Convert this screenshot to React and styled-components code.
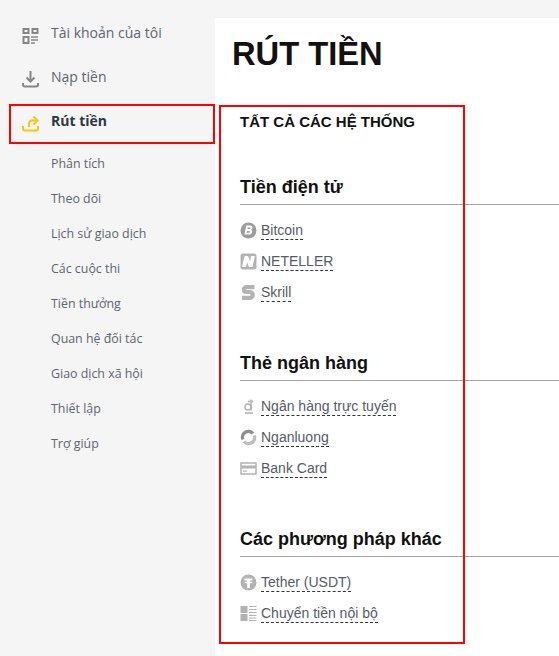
import React from "react";
import styled, { createGlobalStyle } from "styled-components";

const GlobalStyle = createGlobalStyle`
  html, body {
    margin: 0;
    padding: 0;
    height: 100%;
    overflow: hidden;
    background: #f5f5f5;
  }
`;

const Page = styled.div`
  position: relative;
  display: flex;
  width: 559px;
  height: 656px;
  overflow: hidden;
  background: #f5f5f5;
`;

const Sidebar = styled.nav`
  flex: none;
  width: 215px;
  padding-top: 17px;
  box-sizing: border-box;
  font-family: "Open Sans", sans-serif;
`;

const MainLink = styled.div`
  display: flex;
  align-items: flex-start;
  gap: 12px;
  height: 44px;
  padding-left: 22px;
  font-size: 14px;
  line-height: 32px;
  font-weight: ${p => (p.$active ? 700 : 400)};
  color: ${p => (p.$active ? "#2f3542" : "#5d6470")};
`;

const MainIcon = styled.svg`
  flex: none;
  width: 17px;
  height: 17px;
  margin-top: 10px;
`;

const SubList = styled.div`
  display: flex;
  flex-direction: column;
  margin-top: -3px;
  padding-left: 51px;
`;

const SubLink = styled.div`
  height: 35px;
  font-size: 12.4px;
  line-height: 35px;
  color: #5d6470;
`;

const Content = styled.main`
  flex: 1;
  margin-top: 18px;
  padding: 15px 0 0 17px;
  background: #fff;
  font-family: "Liberation Sans", Arial, sans-serif;
`;

const Title = styled.h1`
  margin: 0;
  font-size: 32.7px;
  line-height: 42px;
  font-weight: 700;
  color: #111;
`;

const AllSystems = styled.div`
  margin: 38px 0 0 8px;
  font-size: 15px;
  line-height: 18px;
  font-weight: 700;
  color: #111;
`;

const Group = styled.section`
  margin-top: ${p => (p.$first ? "45px" : "44px")};
  margin-left: 8px;
`;

const GroupTitle = styled.h2`
  margin: 0 0 10px;
  height: 28px;
  font-size: 18px;
  line-height: 23px;
  font-weight: 700;
  color: #111;
  border-bottom: 1px solid #a3a3a3;
`;

const Method = styled.div`
  display: flex;
  align-items: center;
  gap: 4px;
  height: 31px;
`;

const MethodIcon = styled.svg`
  flex: none;
  width: 17px;
  height: 17px;
`;

const MethodName = styled.span`
  font-size: 14px;
  line-height: 17px;
  color: #555b66;
  border-bottom: 1px dashed #333;
`;

const RedBox = styled.div`
  position: absolute;
  box-sizing: border-box;
  border: 2px solid #f00;
  pointer-events: none;
  left: ${p => p.$x}px;
  top: ${p => p.$y}px;
  width: ${p => p.$w}px;
  height: ${p => p.$h}px;
`;

const grey = "#858585";
const light = "#b3b3b3";

const AccountGlyph = () => (
  <MainIcon viewBox="0 0 17 17" fill="none" stroke={grey} strokeWidth="2">
    <rect x="1.5" y="2" width="5" height="4" />
    <rect x="10.5" y="2" width="5" height="4" />
    <rect x="1.5" y="10" width="5" height="6" />
    <path d="M9 10h7M9 13h7M9 16h4" strokeWidth="1.6" />
  </MainIcon>
);

const DepositGlyph = () => (
  <MainIcon viewBox="0 0 17 17" fill="none" stroke={grey} strokeWidth="2">
    <path d="M8.5 0v9" />
    <path d="M4.5 6.500l4 4 4-4" />
    <path d="M1 12v1.500a2 2 0 0 0 2 2h11a2 2 0 0 0 2-2V12" />
  </MainIcon>
);

const WithdrawGlyph = () => (
  <MainIcon viewBox="0 0 17 17" fill="none" stroke="#fcc50b" strokeWidth="2">
    <path d="M1 11v2.500a2 2 0 0 0 2 2h11a2 2 0 0 0 2-2V11" />
    <path d="M7 12V8.500A3 3 0 0 1 10 5.500h4" />
    <path d="M11.500 1.500l4 4-4 4" />
  </MainIcon>
);

const BitcoinIcon = () => (
  <MethodIcon viewBox="0 0 17 17">
    <circle cx="8.500" cy="8.500" r="8" fill="#9c9c9c" />
    <path
      d="M6.300 3.500h4c1.700 0 2.500 1 2.200 2.300-.1.900-.7 1.600-1.500 1.900.9.400 1.400 1.200 1.200 2.200-.3 1.600-1.500 2.600-3.200 2.600H4.400zM7.800 5.600l-.4 1.500h2c.6 0 .9-.2 1-.8 0-.5-.2-.7-.8-.7zM7 9l-.5 1.700h2.300c.7 0 1-.3 1.100-.9 0-.6-.3-.8-.9-.8z"
      fill="#fff"
      fillRule="evenodd"
    />
  </MethodIcon>
);

const NetellerIcon = () => (
  <MethodIcon viewBox="0 0 17 17">
    <rect x="0.500" y="0.500" width="16" height="16" rx="2.500" fill={light} />
    <path d="M2 14L4.500 3H8l2 5 1-5h4l-2.500 11H9L7 9l-1 5z" fill="#fff" />
  </MethodIcon>
);

const SkrillIcon = () => (
  <MethodIcon viewBox="0 0 17 17" fill="none" stroke={light} strokeWidth="4.200">
    <path d="M14.500 3.200H6.500C3 3.200 3 8 6.500 8h3.500c3.500 0 3.500 5.800 0 5.800H2" />
  </MethodIcon>
);

const DongIcon = () => (
  <MethodIcon viewBox="0 0 17 17" fill="none" stroke={light} strokeWidth="1.500">
    <circle cx="8" cy="9" r="3" />
    <path d="M11 1.500v11M8 3.500h5M5 15h8" />
  </MethodIcon>
);

const NganluongIcon = () => (
  <MethodIcon viewBox="0 0 17 17" fill="none" strokeWidth="3.400">
    <path d="M13 4.500A6 6 0 0 0 2.800 10.500" stroke="#8f8f8f" />
    <path d="M4 12.500A6 6 0 0 0 14.200 6.500" stroke="#bdbdbd" />
  </MethodIcon>
);

const CardIcon = () => (
  <MethodIcon viewBox="0 0 17 17" fill="none">
    <rect x="1" y="3" width="15" height="11" stroke={light} strokeWidth="1.500" />
    <rect x="1" y="5.500" width="15" height="3" fill={light} />
    <rect x="3" y="10.500" width="4" height="1.200" fill={light} />
  </MethodIcon>
);

const TetherIcon = () => (
  <MethodIcon viewBox="0 0 17 17">
    <circle cx="8.500" cy="8.500" r="8" fill={light} />
    <path d="M4.500 4.500h8v2H9.800v1.200c1.500.1 2.800.4 2.800.9s-1.300.8-2.800.9V14H7.200v-4.500c-1.500-.1-2.800-.4-2.800-.9s1.300-.8 2.800-.9V6.500H4.500z" fill="#fff" />
  </MethodIcon>
);

const TransferIcon = () => (
  <MethodIcon viewBox="0 0 17 17">
    <rect x="0.500" y="1" width="7" height="7" fill={light} />
    <rect x="0.500" y="9" width="7" height="7" fill={light} />
    <path d="M9 1.500h7.500M9 4.500h7.500M9 7.500h7.500M9 10.500h7.500M9 13h7.500M9 15.500h7.500" stroke={light} strokeWidth="1.100" />
  </MethodIcon>
);

const subLinks = [
  "Phân tích",
  "Theo dõi",
  "Lịch sử giao dịch",
  "Các cuộc thi",
  "Tiền thưởng",
  "Quan hệ đối tác",
  "Giao dịch xã hội",
  "Thiết lập",
  "Trợ giúp"
];

const groups = [
  {
    title: "Tiền điện tử",
    methods: [
      { name: "Bitcoin", Icon: BitcoinIcon },
      { name: "NETELLER", Icon: NetellerIcon },
      { name: "Skrill", Icon: SkrillIcon }
    ]
  },
  {
    title: "Thẻ ngân hàng",
    methods: [
      { name: "Ngân hàng trực tuyến", Icon: DongIcon },
      { name: "Nganluong", Icon: NganluongIcon },
      { name: "Bank Card", Icon: CardIcon }
    ]
  },
  {
    title: "Các phương pháp khác",
    methods: [
      { name: "Tether (USDT)", Icon: TetherIcon },
      { name: "Chuyển tiền nội bộ", Icon: TransferIcon }
    ]
  }
];

const App = () => (
  <>
    <GlobalStyle />
    <Page>
      <Sidebar>
        <MainLink>
          <AccountGlyph />
          Tài khoản của tôi
        </MainLink>
        <MainLink>
          <DepositGlyph />
          Nạp tiền
        </MainLink>
        <MainLink $active>
          <WithdrawGlyph />
          Rút tiền
        </MainLink>
        <SubList>
          {subLinks.map(link => (
            <SubLink key={link}>{link}</SubLink>
          ))}
        </SubList>
      </Sidebar>
      <Content>
        <Title>RÚT TIỀN</Title>
        <AllSystems>TẤT CẢ CÁC HỆ THỐNG</AllSystems>
        {groups.map((group, i) => (
          <Group key={group.title} $first={i === 0}>
            <GroupTitle>{group.title}</GroupTitle>
            {group.methods.map(({ name, Icon }) => (
              <Method key={name}>
                <Icon />
                <MethodName>{name}</MethodName>
              </Method>
            ))}
          </Group>
        ))}
      </Content>
      <RedBox $x={9} $y={104} $w={206} $h={40} />
      <RedBox $x={219} $y={105} $w={246} $h={539} />
    </Page>
  </>
);

export default App;
